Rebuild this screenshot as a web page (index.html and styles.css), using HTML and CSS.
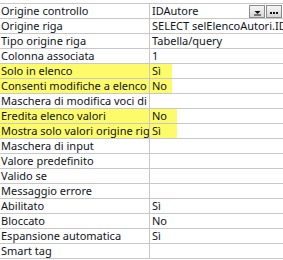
FILE: index.html
```html
<!DOCTYPE html>
<html lang="it">
<head>
    <meta charset="UTF-8">
    <title>Finestra delle proprietà</title>
    <link rel="stylesheet" href="styles.css">
</head>
<body>
    <div class="sheet">
        <div class="row">
            <div class="name">Origine controllo</div>
            <div class="value">IDAutore
                <span class="btns">
                    <span class="btn"><svg width="9" height="9" viewBox="0 0 9 9"><path d="M1.5 4h6L4.5 7z" fill="#111"/><path d="M1 8h7" stroke="#111"/></svg></span>
                    <span class="btn"><svg width="10" height="9" viewBox="0 0 10 9"><rect x="1" y="5" width="2" height="2" fill="#111"/><rect x="4" y="5" width="2" height="2" fill="#111"/><rect x="7" y="5" width="2" height="2" fill="#111"/></svg></span>
                </span>
            </div>
        </div>
        <div class="row"><div class="name">Origine riga</div><div class="value">SELECT selElencoAutori.IDAutore</div></div>
        <div class="row"><div class="name">Tipo origine riga</div><div class="value">Tabella/query</div></div>
        <div class="row"><div class="name">Colonna associata</div><div class="value">1</div></div>
        <div class="row mark"><div class="name">Solo in elenco</div><div class="value"><span class="hl">Sì</span></div></div>
        <div class="row mark"><div class="name">Consenti modifiche a elenco</div><div class="value"><span class="hl">No</span></div></div>
        <div class="row"><div class="name">Maschera di modifica voci di elenco</div><div class="value"></div></div>
        <div class="row mark"><div class="name">Eredita elenco valori</div><div class="value"><span class="hl wide">No</span></div></div>
        <div class="row mark"><div class="name">Mostra solo valori origine riga</div><div class="value"><span class="hl wide">Sì</span></div></div>
        <div class="row"><div class="name">Maschera di input</div><div class="value"></div></div>
        <div class="row"><div class="name">Valore predefinito</div><div class="value"></div></div>
        <div class="row"><div class="name">Valido se</div><div class="value"></div></div>
        <div class="row"><div class="name">Messaggio errore</div><div class="value"></div></div>
        <div class="row"><div class="name">Abilitato</div><div class="value">Sì</div></div>
        <div class="row"><div class="name">Bloccato</div><div class="value">No</div></div>
        <div class="row"><div class="name">Espansione automatica</div><div class="value">Sì</div></div>
        <div class="row"><div class="name">Smart tag</div><div class="value"></div></div>
    </div>
</body>
</html>
```

FILE: styles.css
```css
body {
    margin: 0;
    background: white;
    font-family: "Noto Sans", Arial, sans-serif;
    font-size: 11px;
    color: #10141c;
    overflow: hidden;
}
.sheet {
    padding-top: 3px;
}
.row {
    display: grid;
    grid-template-columns: 150px 1fr;
    height: 15px;
    border-top: 1px solid #c8c8c8;
    box-sizing: border-box;
}
.row:last-child {
    height: 16px;
    border-bottom: 1px solid #c8c8c8;
}
.name {
    padding-left: 1px;
    line-height: 14px;
    white-space: nowrap;
    overflow: hidden;
    border-right: 1px solid #c8c8c8;
}
.value {
    padding-left: 2px;
    line-height: 14px;
    white-space: nowrap;
    overflow: hidden;
    display: flex;
    align-items: center;
}
.mark .name {
    background: #fdfb6a;
}
.hl {
    display: block;
    width: 20px;
    margin-left: -2px;
    padding-left: 2px;
    background: #fdfb6a;
}
.hl.wide {
    width: 25px;
}
.btns {
    margin-left: auto;
    display: flex;
    gap: 1px;
    padding-right: 1px;
}
.btn {
    width: 16px;
    height: 13px;
    border: 1px solid #8c8c8c;
    background: linear-gradient(#f6f6f6, #d6d6d6);
    box-sizing: border-box;
    display: flex;
    align-items: center;
    justify-content: center;
}
```
